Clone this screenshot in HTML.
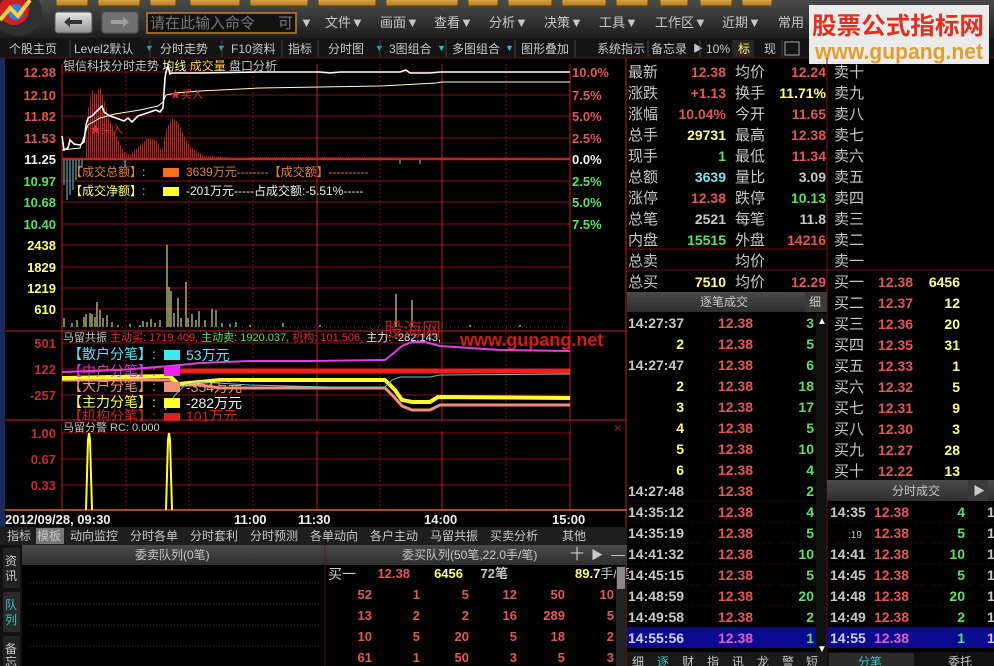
<!DOCTYPE html>
<html><head><meta charset="utf-8">
<style>
html,body{margin:0;padding:0;background:#000;width:994px;height:666px;overflow:hidden}
svg{display:block}
text{font-family:"Liberation Sans","Noto Sans CJK SC",sans-serif}
.g{fill:#c8c8c8}.r{fill:#e05858}.y{fill:#ffff88}.gr{fill:#60e060}.c{fill:#80e0e8}.w{fill:#f0f0f0}
.b{font-weight:bold}
</style></head><body>
<svg width="994" height="666" viewBox="0 0 994 666" xmlns="http://www.w3.org/2000/svg">
<defs>
<linearGradient id="tb" x1="0" y1="0" x2="0" y2="1"><stop offset="0" stop-color="#4a4a4a"/><stop offset="1" stop-color="#1e1e1e"/></linearGradient>
<linearGradient id="gold" x1="0" y1="0" x2="0" y2="1"><stop offset="0" stop-color="#f0c060"/><stop offset="1" stop-color="#b07820"/></linearGradient>
<linearGradient id="btn" x1="0" y1="0" x2="0" y2="1"><stop offset="0" stop-color="#e8e8e8"/><stop offset="1" stop-color="#909090"/></linearGradient>
<linearGradient id="hdr" x1="0" y1="0" x2="0" y2="1"><stop offset="0" stop-color="#4a4a4a"/><stop offset="1" stop-color="#2e2e2e"/></linearGradient>
<pattern id="stripe" width="2" height="4" patternUnits="userSpaceOnUse"><rect width="1" height="4" fill="#c02020"/></pattern>
</defs>
<rect width="994" height="666" fill="#000"/>
<!-- top toolbar -->
<rect x="0" y="0" width="994" height="38" fill="url(#tb)"/>
<g fill="url(#gold)" stroke="#6a4a10">
<rect x="56" y="-4" width="32" height="10" rx="2"/><rect x="98" y="-4" width="42" height="10" rx="2"/>
<rect x="150" y="-4" width="26" height="10" rx="2"/><rect x="190" y="-4" width="50" height="10" rx="2"/>
<rect x="250" y="-4" width="58" height="10" rx="2"/><rect x="318" y="-4" width="58" height="10" rx="2"/>
<rect x="386" y="-4" width="72" height="10" rx="2"/><rect x="468" y="-4" width="30" height="10" rx="2"/>
<rect x="508" y="-4" width="44" height="10" rx="2"/><rect x="562" y="-4" width="44" height="10" rx="2"/>
<rect x="616" y="-4" width="32" height="10" rx="2"/><rect x="660" y="-4" width="28" height="10" rx="2"/>
<rect x="700" y="-4" width="32" height="10" rx="2"/><rect x="742" y="-4" width="30" height="10" rx="2"/>
</g>
<circle cx="18" cy="12" r="24" fill="#303030"/>
<circle cx="14" cy="10" r="15" fill="#d02020"/>
<circle cx="16" cy="12" r="8" fill="#3080e0"/>
<path d="M0 20 L10 8 L18 16 L30 0" stroke="#ffd040" stroke-width="4" fill="none"/>
<rect x="55" y="12" width="37" height="21" rx="3" fill="url(#btn)" stroke="#555"/>
<path d="M64 22 l6 -5 v3 h12 v4 h-12 v3z" fill="#333"/>
<rect x="102" y="12" width="36" height="21" rx="3" fill="#707070" stroke="#555"/>
<path d="M129 22 l-6 -5 v3 h-12 v4 h12 v3z" fill="#a0a0a0"/>
<rect x="147" y="13" width="149" height="20" fill="#111" stroke="#c08030" stroke-width="1.5"/>
<text x="150" y="28" font-size="15" fill="#777">请在此输入命令</text>
<text x="278" y="28" font-size="15" fill="#777">可</text>
<g font-size="13" class="g">
<text x="300" y="27">▼</text>
<text x="325" y="27">文件▼</text><text x="380" y="27">画面▼</text><text x="434" y="27">查看▼</text>
<text x="489" y="27">分析▼</text><text x="544" y="27">决策▼</text><text x="599" y="27">工具▼</text>
<text x="655" y="27">工作区▼</text><text x="722" y="27">近期▼</text><text x="778" y="27">常用</text>
</g>
<!-- tab row -->
<rect x="0" y="38" width="994" height="20" fill="#141414"/>
<line x1="0" y1="58" x2="994" y2="58" stroke="#5a1010"/>
<g font-size="12" class="g">
<text x="9" y="53">个股主页</text><text x="74" y="53">Level2默认</text><text x="160" y="53">分时走势</text>
<text x="231" y="53">F10资料</text><text x="288" y="53">指标</text><text x="328" y="53">分时图</text>
<text x="389" y="53">3图组合</text><text x="452" y="53">多图组合</text><text x="521" y="53">图形叠加</text>
<text x="597" y="53">系统指示</text><text x="651" y="53">备忘录</text><text x="706" y="53">10%</text>
<text x="764" y="53">现</text>
</g>
<rect x="732" y="40" width="22" height="17" fill="#333" opacity=".6"/>
<text x="738" y="53" font-size="12" fill="#ffff60">标</text>
<g fill="#30c0c0" font-size="9"><text x="145" y="51">▼</text><text x="217" y="51">▼</text><text x="375" y="51">▼</text><text x="437" y="51">▼</text><text x="505" y="51">▼</text></g>
<text x="693" y="52" font-size="10" class="g">▶</text>
<g stroke="#444"><line x1="70" y1="40" x2="70" y2="57"/><line x1="150" y1="40" x2="150" y2="57"/><line x1="222" y1="40" x2="222" y2="57"/><line x1="282" y1="40" x2="282" y2="57"/><line x1="318" y1="40" x2="318" y2="57"/><line x1="380" y1="40" x2="380" y2="57"/><line x1="446" y1="40" x2="446" y2="57"/><line x1="515" y1="40" x2="515" y2="57"/><line x1="575" y1="40" x2="575" y2="57"/><line x1="648" y1="40" x2="648" y2="57"/><line x1="700" y1="40" x2="700" y2="57"/><line x1="782" y1="40" x2="782" y2="57"/></g>
<rect x="785" y="42" width="14" height="13" fill="none" stroke="#aaa"/>
<!-- watermark -->
<rect x="809" y="5" width="180" height="59" fill="#ebebeb"/>
<text x="812" y="34" font-size="24" font-weight="bold" fill="#e03020" textLength="172" lengthAdjust="spacingAndGlyphs">股票公式指标网</text>
<text x="815" y="59" font-size="22" font-weight="bold" fill="#e0a030" textLength="168" lengthAdjust="spacingAndGlyphs">www.gupang.net</text>
<!-- left strip -->
<rect x="0" y="58" width="5" height="470" fill="#1a2a5a"/>
<!-- chart frame -->
<g stroke="#8a1010" stroke-width="1">
<line x1="62" y1="72" x2="570" y2="72"/><line x1="62" y1="95" x2="570" y2="95"/><line x1="62" y1="116" x2="570" y2="116"/><line x1="62" y1="138" x2="570" y2="138"/>
<line x1="62" y1="181" x2="570" y2="181"/><line x1="62" y1="202" x2="570" y2="202"/><line x1="62" y1="224" x2="570" y2="224"/>
<line x1="62" y1="245" x2="570" y2="245"/><line x1="62" y1="267" x2="570" y2="267"/><line x1="62" y1="288" x2="570" y2="288"/><line x1="62" y1="309" x2="570" y2="309"/>
<line x1="62" y1="343" x2="570" y2="343"/><line x1="62" y1="369" x2="570" y2="369"/><line x1="62" y1="395" x2="570" y2="395"/>
<line x1="62" y1="433" x2="570" y2="433"/><line x1="62" y1="459" x2="570" y2="459"/><line x1="62" y1="485" x2="570" y2="485"/>
<line x1="126" y1="64" x2="126" y2="510" stroke-dasharray="2,2"/><line x1="189" y1="64" x2="189" y2="510" stroke-dasharray="2,2"/>
<line x1="253" y1="64" x2="253" y2="510" stroke-dasharray="2,2"/><line x1="380" y1="64" x2="380" y2="510" stroke-dasharray="2,2"/>
<line x1="506" y1="64" x2="506" y2="510" stroke-dasharray="2,2"/>
</g>
<g stroke="#c02020" stroke-width="1">
<line x1="317" y1="64" x2="317" y2="510"/><line x1="442" y1="64" x2="442" y2="510"/>
<line x1="62" y1="64" x2="62" y2="510"/><line x1="570" y1="64" x2="570" y2="510"/>
<line x1="5" y1="331" x2="627" y2="331"/><line x1="5" y1="420" x2="627" y2="420"/>
<line x1="626" y1="58" x2="626" y2="666"/>
</g>
<line x1="62" y1="159" x2="570" y2="159" stroke="#d02020" stroke-width="2.5"/>
<line x1="5" y1="510" x2="627" y2="510" stroke="#e06020" stroke-width="1.5"/>
<!-- left axis -->
<g font-size="13" class="b">
<text x="56" y="77" text-anchor="end" class="r">12.38</text><text x="56" y="100" text-anchor="end" class="r">12.10</text>
<text x="56" y="121" text-anchor="end" class="r">11.82</text><text x="56" y="143" text-anchor="end" class="r">11.53</text>
<text x="56" y="164" text-anchor="end" class="w">11.25</text><text x="56" y="186" text-anchor="end" class="gr">10.97</text>
<text x="56" y="207" text-anchor="end" class="gr">10.68</text><text x="56" y="229" text-anchor="end" class="gr">10.40</text>
<text x="56" y="250" text-anchor="end" class="y">2438</text><text x="56" y="272" text-anchor="end" class="y">1829</text>
<text x="56" y="293" text-anchor="end" class="y">1219</text><text x="56" y="314" text-anchor="end" class="y">610</text>
</g>
<g font-size="13" fill="#c03030" class="b">
<text x="56" y="348" text-anchor="end">501</text><text x="56" y="374" text-anchor="end">122</text><text x="56" y="400" text-anchor="end">-257</text>
<text x="56" y="438" text-anchor="end">1.00</text><text x="56" y="464" text-anchor="end">0.67</text><text x="56" y="490" text-anchor="end">0.33</text>
</g>
<!-- right axis -->
<g font-size="13" class="b">
<text x="572" y="77" class="r">10.0%</text><text x="572" y="100" class="r">7.5%</text><text x="572" y="121" class="r">5.0%</text><text x="572" y="143" class="r">2.5%</text>
<text x="572" y="164" class="w">0.0%</text><text x="572" y="186" class="gr">2.5%</text><text x="572" y="207" class="gr">5.0%</text><text x="572" y="229" class="gr">7.5%</text>
</g>
<!-- time axis -->
<g font-size="13" class="w b">
<text x="5" y="524">2012/09/28, 09:30</text><text x="234" y="524">11:00</text><text x="298" y="524">11:30</text><text x="424" y="524">14:00</text><text x="552" y="524">15:00</text>
</g>
<!-- chart title -->
<text x="63" y="70" font-size="12"><tspan class="g">银信科技分时走势 </tspan><tspan class="y">均线 </tspan><tspan fill="#ffd060">成交量 </tspan><tspan class="g">盘口分析</tspan></text>
<!-- red volume in price panel -->
<path d="M85 159 L88 110 L92 90 L96 95 L100 86 L104 100 L110 120 L118 140 L124 152 L130 155 L140 145 L148 138 L156 140 L162 152 L166 130 L172 118 L178 122 L186 140 L194 150 L205 156 L240 158 L260 157 L570 158 L570 159 L85 159z" fill="url(#stripe)"/>
<!-- cyan bars -->
<g stroke="#70c8d8" stroke-width="1">
<line x1="64" y1="160" x2="64" y2="185"/><line x1="67" y1="160" x2="67" y2="200"/><line x1="70" y1="160" x2="70" y2="195"/><line x1="73" y1="160" x2="73" y2="190"/><line x1="76" y1="160" x2="76" y2="180"/><line x1="79" y1="160" x2="79" y2="172"/><line x1="82" y1="160" x2="82" y2="168"/><line x1="125" y1="160" x2="125" y2="168"/><line x1="400" y1="160" x2="400" y2="164"/><line x1="420" y1="160" x2="420" y2="164"/>
</g>
<!-- avg line -->
<polyline points="62,150 80,148 88,125 100,118 115,114 140,110 158,106 163,102 166,95 175,93 200,91 260,88 320,87 380,86 436,83 442,82 570,82" fill="none" stroke="#ffffc0" stroke-width="1"/>
<!-- price line -->
<polyline points="62,136 64,150 68,148 70,140 74,144 80,145 84,142 86,125 88,118 92,116 98,110 102,106 104,112 110,116 116,118 124,121 128,118 132,122 138,116 144,114 150,112 156,110 160,112 163,108 165,78 166,72 168,66 170,74 172,73 200,73 260,72 320,72 330,73 340,72 400,72 406,70 410,73 430,73 440,72 570,72" fill="none" stroke="#ffffff" stroke-width="1.6"/>
<text x="170" y="98" font-size="11" fill="#e03030">★买入</text>
<text x="90" y="133" font-size="11" fill="#e03030">★买入</text>
<!-- amount legend -->
<text x="70" y="176" font-size="12"><tspan fill="#e08040">【成交总额】</tspan><tspan class="g">:</tspan></text>
<rect x="163" y="168" width="16" height="9" fill="#f07020"/>
<text x="186" y="176" font-size="12" fill="#e08040">3639万元--------【成交额】----------</text>
<text x="70" y="195" font-size="12"><tspan fill="#ffff80">【成交净额】</tspan><tspan class="g">:</tspan></text>
<rect x="163" y="187" width="16" height="9" fill="#ffff30"/>
<text x="186" y="195" font-size="12" class="w">-201万元-----占成交额:-5.51%-----</text>
<!-- volume bars -->
<g stroke="#ffffa0" stroke-width="1">
<line x1="64" y1="327" x2="64" y2="318"/><line x1="72" y1="327" x2="72" y2="323"/><line x1="77" y1="327" x2="77" y2="320"/><line x1="84" y1="327" x2="84" y2="317"/>
<line x1="86" y1="327" x2="86" y2="314"/><line x1="90" y1="327" x2="90" y2="313"/><line x1="92" y1="327" x2="92" y2="314"/><line x1="95" y1="327" x2="95" y2="317"/>
<line x1="97" y1="327" x2="97" y2="302"/><line x1="100" y1="327" x2="100" y2="310"/><line x1="103" y1="327" x2="103" y2="318"/><line x1="107" y1="327" x2="107" y2="315"/>
<line x1="112" y1="327" x2="112" y2="322"/><line x1="118" y1="327" x2="118" y2="325"/><line x1="130" y1="327" x2="130" y2="324"/><line x1="140" y1="327" x2="140" y2="325"/>
<line x1="143" y1="327" x2="143" y2="321"/><line x1="147" y1="327" x2="147" y2="322"/><line x1="151" y1="327" x2="151" y2="319"/><line x1="155" y1="327" x2="155" y2="323"/><line x1="160" y1="327" x2="160" y2="320"/>
<line x1="167" y1="327" x2="167" y2="245"/><line x1="169" y1="327" x2="169" y2="287"/><line x1="171" y1="327" x2="171" y2="291"/><line x1="174" y1="327" x2="174" y2="313"/>
<line x1="178" y1="327" x2="178" y2="298"/><line x1="181" y1="327" x2="181" y2="318"/><line x1="186" y1="327" x2="186" y2="282"/><line x1="188" y1="327" x2="188" y2="318"/>
<line x1="192" y1="327" x2="192" y2="314"/><line x1="196" y1="327" x2="196" y2="320"/><line x1="199" y1="327" x2="199" y2="311"/><line x1="205" y1="327" x2="205" y2="320"/>
<line x1="212" y1="327" x2="212" y2="309"/><line x1="216" y1="327" x2="216" y2="310"/><line x1="222" y1="327" x2="222" y2="323"/><line x1="230" y1="327" x2="230" y2="324"/>
<line x1="236" y1="327" x2="236" y2="322"/><line x1="250" y1="327" x2="250" y2="325"/><line x1="283" y1="327" x2="283" y2="323"/><line x1="320" y1="327" x2="320" y2="325"/>
<line x1="396" y1="327" x2="396" y2="294"/><line x1="412" y1="327" x2="412" y2="300"/><line x1="430" y1="327" x2="430" y2="324"/><line x1="470" y1="327" x2="470" y2="325"/><line x1="520" y1="327" x2="520" y2="325"/>
</g>
<line x1="62" y1="327" x2="570" y2="327" stroke="#555" stroke-dasharray="1,3"/>
<!-- indicator panel -->
<text x="63" y="341" font-size="11"><tspan class="g">马留共振 </tspan><tspan fill="#e03030">主动买: 1719.409, </tspan><tspan fill="#60e060">主动卖: 1920.037, </tspan><tspan fill="#e03030">机构: 101.506, </tspan><tspan class="w">主力: -282.143,</tspan></text>
<text x="384" y="336" font-size="19" fill="#e02020" opacity=".85">股海网</text>
<text x="460" y="346" font-size="18" font-weight="bold" fill="#e02020" opacity=".9">www.gupang.net</text>
<polyline points="62,372 120,370 170,366 200,363 250,361 310,361 385,360 395,352 402,346 412,342 425,342 440,346 470,348 500,350 570,351" fill="none" stroke="#e040e0" stroke-width="2"/>
<polyline points="62,380 170,380 180,385 200,385 220,388 385,388 395,398 402,406 412,410 430,410 440,405 570,405" fill="none" stroke="#f09078" stroke-width="3"/>
<polyline points="62,378 170,376 178,384 200,382 220,380 385,380 395,390 402,400 412,402 430,402 438,397 570,398" fill="none" stroke="#ffff30" stroke-width="4"/>
<polyline points="165,410 175,395 185,385 200,382 250,385 330,387 385,387 392,380 400,377 410,377 430,377 440,375 570,374" fill="none" stroke="#70c0d0" stroke-width="1"/>
<line x1="170" y1="371" x2="570" y2="371" stroke="#f02020" stroke-width="5"/>
<g font-size="14">
<text x="68" y="359" fill="#60e0f0">【散户分笔】:</text><rect x="164" y="350" width="16" height="10" fill="#40e8f0"/><text x="186" y="360" fill="#60e0f0">53万元</text>
<text x="68" y="376" fill="#e040e0" opacity=".9">【中户分笔】:</text><rect x="164" y="366" width="16" height="10" fill="#f020f0"/>
<text x="68" y="391" fill="#f09078">【大户分笔】:</text><rect x="164" y="382" width="16" height="10" fill="#f09078"/><text x="186" y="392" fill="#f09078">-354万元</text>
<text x="68" y="407" fill="#ffff60">【主力分笔】:</text><rect x="164" y="398" width="16" height="10" fill="#ffff30"/><text x="186" y="408" class="w">-282万元</text>
<text x="68" y="421" fill="#d02020">【机构分笔】:</text><rect x="164" y="413" width="16" height="8" fill="#e02020"/><text x="186" y="421" fill="#d02020">101万元</text>
</g>
<!-- panel 3 -->
<rect x="62" y="421" width="508" height="10" fill="#000"/>
<text x="63" y="431" font-size="11" class="g">马留分警 RC: 0.000</text>
<polyline points="86,510 88,440 89,433 90,440 92,510" fill="none" stroke="#ffff30" stroke-width="2"/>
<polyline points="166,510 168,440 169,433 170,440 172,510" fill="none" stroke="#ffff30" stroke-width="2"/>
<text x="613" y="432" font-size="11" fill="#802020">✕</text>
<!-- bottom-left tabs -->
<rect x="0" y="527" width="627" height="18" fill="#1e1e1e"/>
<rect x="36" y="528" width="28" height="16" fill="#777"/>
<g font-size="12" class="g">
<text x="7" y="540">指标</text><text x="37" y="540">模板</text><text x="70" y="540">动向监控</text><text x="130" y="540">分时各单</text>
<text x="190" y="540">分时套利</text><text x="250" y="540">分时预测</text><text x="310" y="540">各单动向</text><text x="370" y="540">各户主动</text>
<text x="430" y="540">马留共振</text><text x="490" y="540">买卖分析</text><text x="562" y="540">其他</text>
</g>
<rect x="22" y="545" width="605" height="20" fill="url(#hdr)"/>
<line x1="325" y1="545" x2="325" y2="666" stroke="#5a1010"/>
<text x="135" y="559" font-size="12" class="g">委卖队列(0笔)</text>
<text x="402" y="559" font-size="12" class="g">委买队列(50笔,22.0手/笔)</text>
<text x="570" y="559" font-size="14" class="g">十</text><text x="591" y="559" font-size="12" class="g">▶</text><text x="611" y="559" font-size="14" class="g">—</text>
<rect x="0" y="545" width="22" height="121" fill="#111"/>
<rect x="3" y="548" width="17" height="40" fill="#222"/><text x="5" y="565" font-size="12" class="g">资</text><text x="5" y="580" font-size="12" class="g">讯</text>
<rect x="3" y="592" width="17" height="40" fill="#2a2a2a"/><text x="5" y="609" font-size="12" fill="#40c0c0">队</text><text x="5" y="624" font-size="12" fill="#40c0c0">列</text>
<rect x="3" y="636" width="17" height="30" fill="#222"/><text x="5" y="653" font-size="12" class="g">备</text><text x="5" y="666" font-size="12" class="g">忘</text>
<g stroke="#333" stroke-dasharray="1,2"><line x1="30" y1="583" x2="320" y2="583"/><line x1="30" y1="604" x2="320" y2="604"/><line x1="30" y1="625" x2="320" y2="625"/><line x1="30" y1="646" x2="320" y2="646"/></g>
<text x="328" y="579" font-size="14" class="g">买一</text>
<g font-size="13" class="b">
<text x="410" y="578" text-anchor="end" class="r">12.38</text><text x="463" y="578" text-anchor="end" class="y">6456</text>
<text x="508" y="578" text-anchor="end" fill="#c8c8c8">72笔</text><text x="575" y="578"><tspan class="y">89.7</tspan><tspan class="g" font-weight="normal">手/笔</tspan></text>
</g>
<g font-size="13" class="r b" text-anchor="end">
<text x="372" y="599">52</text><text x="420" y="599">1</text><text x="469" y="599">5</text><text x="517" y="599">12</text><text x="565" y="599">50</text><text x="614" y="599">10</text>
<text x="372" y="620">13</text><text x="420" y="620">2</text><text x="469" y="620">2</text><text x="517" y="620">16</text><text x="565" y="620">289</text><text x="614" y="620">5</text>
<text x="372" y="641">10</text><text x="420" y="641">5</text><text x="469" y="641">20</text><text x="517" y="641">5</text><text x="565" y="641">18</text><text x="614" y="641">2</text>
<text x="372" y="662">61</text><text x="420" y="662">1</text><text x="469" y="662">50</text><text x="517" y="662">3</text><text x="565" y="662">5</text><text x="614" y="662">3</text>
</g>
<rect x="616" y="566" width="10" height="100" fill="#222"/><rect x="617" y="567" width="8" height="22" fill="#888"/>
<!-- quote panel -->
<g stroke="#7a1010"><line x1="627" y1="249" x2="827" y2="249"/><line x1="627" y1="270" x2="827" y2="270"/><line x1="827" y1="58" x2="827" y2="666"/><line x1="827" y1="270" x2="994" y2="270"/></g>
<g font-size="15" class="g">
<text x="628" y="77">最新</text><text x="628" y="98">涨跌</text><text x="628" y="119">涨幅</text><text x="628" y="140">总手</text><text x="628" y="161">现手</text>
<text x="628" y="182">总额</text><text x="628" y="203">涨停</text><text x="628" y="224">总笔</text><text x="628" y="245">内盘</text><text x="628" y="266">总卖</text><text x="628" y="287">总买</text>
<text x="735" y="77">均价</text><text x="735" y="98">换手</text><text x="735" y="119">今开</text><text x="735" y="140">最高</text><text x="735" y="161">最低</text>
<text x="735" y="182">量比</text><text x="735" y="203">跌停</text><text x="735" y="224">每笔</text><text x="735" y="245">外盘</text><text x="735" y="266">均价</text><text x="735" y="287">均价</text>
</g>
<g font-size="14" class="b" text-anchor="end">
<text x="726" y="77" class="r">12.38</text><text x="726" y="98" class="r">+1.13</text><text x="726" y="119" class="r">10.04%</text><text x="726" y="140" class="y">29731</text>
<text x="726" y="161" class="gr">1</text><text x="726" y="182" class="c">3639</text><text x="726" y="203" class="r">12.38</text><text x="726" y="224" class="g">2521</text>
<text x="726" y="245" class="gr">15515</text><text x="726" y="287" class="y">7510</text>
<text x="826" y="77" class="r">12.24</text><text x="826" y="98" class="y">11.71%</text><text x="826" y="119" class="r">11.65</text><text x="826" y="140" class="r">12.38</text>
<text x="826" y="161" class="r">11.34</text><text x="826" y="182" class="g">3.09</text><text x="826" y="203" class="gr">10.13</text><text x="826" y="224" class="g">11.8</text>
<text x="826" y="245" class="r">14216</text><text x="826" y="287" class="r">12.29</text>
</g>
<rect x="627" y="292" width="186" height="20" fill="url(#hdr)"/><rect x="805" y="292" width="22" height="20" fill="#3a3a3a"/>
<text x="700" y="306" font-size="12" class="g">逐笔成交</text><text x="809" y="306" font-size="12" class="g">细</text>
<rect x="627" y="627" width="189" height="21" fill="#0a0a90"/>
<g stroke="#3a1010" stroke-dasharray="1,2"><line x1="627" y1="501" x2="816" y2="501"/><line x1="627" y1="522" x2="816" y2="522"/><line x1="627" y1="543" x2="816" y2="543"/><line x1="627" y1="564" x2="816" y2="564"/><line x1="627" y1="585" x2="816" y2="585"/><line x1="627" y1="606" x2="816" y2="606"/></g>
<g font-size="14" class="b">
<g class="g"><text x="628" y="328">14:27:37</text><text x="628" y="370">14:27:47</text><text x="628" y="496">14:27:48</text><text x="628" y="517">14:35:12</text><text x="628" y="538">14:35:19</text><text x="628" y="559">14:41:32</text><text x="628" y="580">14:45:15</text><text x="628" y="601">14:48:59</text><text x="628" y="622">14:49:58</text><text x="628" y="643" fill="#d0d0f0">14:55:56</text></g>
<g class="y" text-anchor="end"><text x="684" y="349">2</text><text x="684" y="391">2</text><text x="684" y="412">3</text><text x="684" y="433">4</text><text x="684" y="454">5</text><text x="684" y="475">6</text></g>
<g class="r"><text x="718" y="328">12.38</text><text x="718" y="349">12.38</text><text x="718" y="370">12.38</text><text x="718" y="391">12.38</text><text x="718" y="412">12.38</text><text x="718" y="433">12.38</text><text x="718" y="454">12.38</text><text x="718" y="475">12.38</text><text x="718" y="496">12.38</text><text x="718" y="517">12.38</text><text x="718" y="538">12.38</text><text x="718" y="559">12.38</text><text x="718" y="580">12.38</text><text x="718" y="601">12.38</text><text x="718" y="622">12.38</text><text x="718" y="643" fill="#e060c0">12.38</text></g>
<g class="gr" text-anchor="end"><text x="814" y="328">3</text><text x="814" y="349">5</text><text x="814" y="370">6</text><text x="814" y="391">18</text><text x="814" y="412">17</text><text x="814" y="433">5</text><text x="814" y="454">10</text><text x="814" y="475">4</text><text x="814" y="496">2</text><text x="814" y="517">4</text><text x="814" y="538">5</text><text x="814" y="559">10</text><text x="814" y="580">5</text><text x="814" y="601">20</text><text x="814" y="622">2</text><text x="814" y="643">1</text></g>
</g>
<rect x="816" y="313" width="10" height="340" fill="#111"/>
<text x="817" y="324" font-size="10" class="w">▲</text><text x="817" y="652" font-size="10" class="w">▼</text>
<rect x="627" y="652" width="200" height="14" fill="#1a1a1a"/>
<g font-size="12" class="g"><text x="632" y="666">细</text><text x="657" y="666" fill="#40c0c0">逐</text><text x="682" y="666">财</text><text x="707" y="666">指</text><text x="732" y="666">讯</text><text x="757" y="666">龙</text><text x="782" y="666">警</text><text x="806" y="666">短</text></g>
<!-- order book -->
<g font-size="15" class="g">
<text x="834" y="77">卖十</text><text x="834" y="98">卖九</text><text x="834" y="119">卖八</text><text x="834" y="140">卖七</text><text x="834" y="161">卖六</text>
<text x="834" y="182">卖五</text><text x="834" y="203">卖四</text><text x="834" y="224">卖三</text><text x="834" y="245">卖二</text><text x="834" y="266">卖一</text>
<text x="834" y="287">买一</text><text x="834" y="308">买二</text><text x="834" y="329">买三</text><text x="834" y="350">买四</text><text x="834" y="371">买五</text>
<text x="834" y="392">买六</text><text x="834" y="413">买七</text><text x="834" y="434">买八</text><text x="834" y="455">买九</text><text x="834" y="476">买十</text>
</g>
<g font-size="14" class="b">
<g class="r"><text x="878" y="287">12.38</text><text x="878" y="308">12.37</text><text x="878" y="329">12.36</text><text x="878" y="350">12.35</text><text x="878" y="371">12.33</text><text x="878" y="392">12.32</text><text x="878" y="413">12.31</text><text x="878" y="434">12.30</text><text x="878" y="455">12.27</text><text x="878" y="476">12.22</text></g>
<g class="y" text-anchor="end"><text x="960" y="287">6456</text><text x="960" y="308">12</text><text x="960" y="329">20</text><text x="960" y="350">31</text><text x="960" y="371">1</text><text x="960" y="392">5</text><text x="960" y="413">9</text><text x="960" y="434">3</text><text x="960" y="455">28</text><text x="960" y="476">13</text></g>
</g>
<rect x="827" y="480" width="167" height="21" fill="url(#hdr)"/><rect x="968" y="480" width="20" height="21" fill="#3a3a3a"/>
<text x="892" y="495" font-size="12" class="g">分时成交</text><text x="973" y="495" font-size="12" class="g">▶</text>
<rect x="827" y="627" width="167" height="21" fill="#0a0a90"/>
<g stroke="#3a1010" stroke-dasharray="1,2"><line x1="827" y1="522" x2="994" y2="522"/><line x1="827" y1="543" x2="994" y2="543"/><line x1="827" y1="564" x2="994" y2="564"/><line x1="827" y1="585" x2="994" y2="585"/><line x1="827" y1="606" x2="994" y2="606"/></g>
<g font-size="14" class="b">
<g class="g"><text x="830" y="517">14:35</text><text x="848" y="538" font-size="10" font-weight="normal">:19</text><text x="830" y="559">14:41</text><text x="830" y="580">14:45</text><text x="830" y="601">14:48</text><text x="830" y="622">14:49</text><text x="830" y="643" fill="#d0d0f0">14:55</text></g>
<g class="r"><text x="874" y="517">12.38</text><text x="874" y="538">12.38</text><text x="874" y="559">12.38</text><text x="874" y="580">12.38</text><text x="874" y="601">12.38</text><text x="874" y="622">12.38</text><text x="874" y="643" fill="#e060c0">12.38</text></g>
<g class="gr" text-anchor="end"><text x="965" y="517">4</text><text x="965" y="538">5</text><text x="965" y="559">10</text><text x="965" y="580">5</text><text x="965" y="601">20</text><text x="965" y="622">2</text><text x="965" y="643">1</text></g>
<g class="g"><text x="987" y="517">1</text><text x="987" y="538">1</text><text x="987" y="559">1</text><text x="987" y="580">1</text><text x="987" y="601">1</text><text x="987" y="622">1</text><text x="987" y="643">1</text></g>
</g>
<rect x="827" y="652" width="167" height="14" fill="#111"/>
<rect x="829" y="653" width="85" height="13" fill="#2a2a2a"/>
<text x="858" y="666" font-size="12" fill="#40c0c0">分笔</text><text x="948" y="666" font-size="12" class="g">委托</text>
</svg>
</body></html>
